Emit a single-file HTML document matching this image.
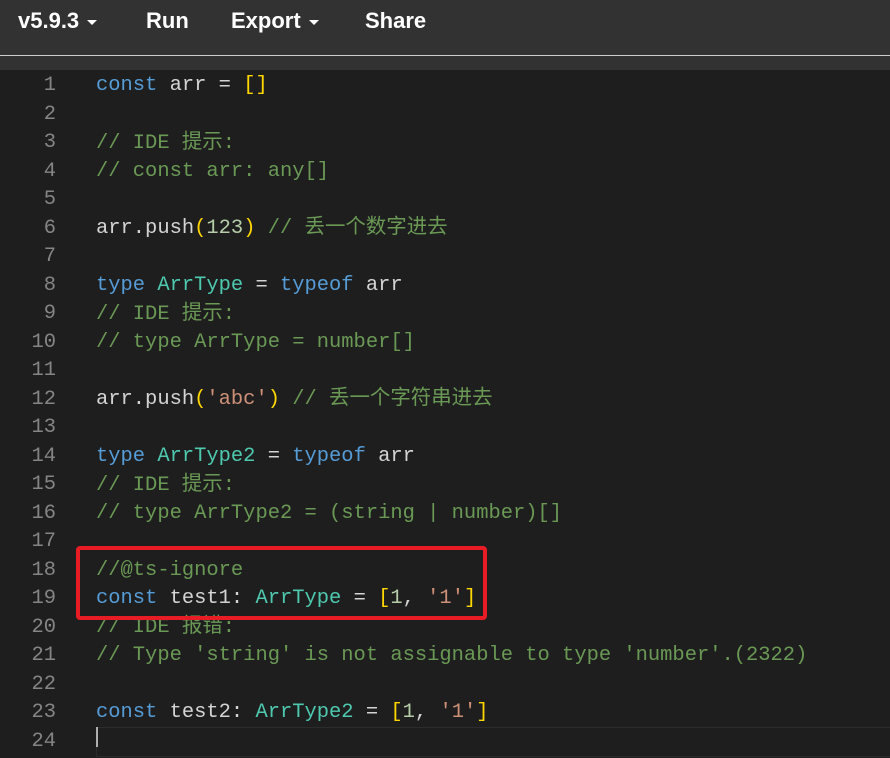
<!DOCTYPE html>
<html><head><meta charset="utf-8"><style>
body{margin:0;width:890px;height:745px;overflow:hidden;background:#1e1e1e;}
.hdr{position:absolute;left:0;top:0;width:890px;height:56px;background:#323232;border-bottom:1px solid #cfcfcf;box-sizing:border-box;}
.hdr span{position:absolute;top:8px;font:bold 22px "Liberation Sans",sans-serif;color:#fff;}
.car{display:inline-block;width:0;height:0;border-left:5px solid transparent;border-right:5px solid transparent;border-top:5px solid #fff;vertical-align:middle;margin-left:8px;}
.gap{position:absolute;left:0;top:56px;width:890px;height:14px;background:#323232;}
.ed{position:absolute;left:0;top:74px;width:890px;}
.l{position:relative;height:28.5px;line-height:28.5px;font:20.45px "Liberation Mono","Noto Sans CJK SC",monospace;color:#d4d4d4;white-space:pre;}
.n{position:absolute;left:0;width:56px;text-align:right;color:#858585;}
.c{position:absolute;left:96px;top:0;}
.c.cj{top:-7.5px}
.k{color:#569cd6}.t{color:#4ec9b0}.m{color:#6a9955}.b{color:#ffd700}.d{color:#b5cea8}.s{color:#ce9178}
.box{position:absolute;left:76px;top:546px;width:411px;height:74px;border:4px solid #e81c24;border-radius:4px;box-sizing:border-box;}
.cur{position:absolute;left:96px;top:727px;width:794px;height:28px;border:1px solid #2c2c2c;}
.cursor{position:absolute;left:96px;top:727px;width:2px;height:20px;background:#aeafad;}
</style></head><body>
<div class="hdr">
<span style="left:18px">v5.9.3<i class="car"></i></span>
<span style="left:146px">Run</span>
<span style="left:231px">Export<i class="car"></i></span>
<span style="left:365px">Share</span>
</div>
<div class="gap"></div>
<div class="cur"></div><div class="cursor"></div>
<div class="ed">
<div class="l"><span class="n">1</span><span class="c"><span class="k">const</span> arr = <span class="b">[]</span></span></div>
<div class="l"><span class="n">2</span></div>
<div class="l"><span class="n">3</span><span class="c cj m">// IDE 提示:</span></div>
<div class="l"><span class="n">4</span><span class="c m">// const arr: any[]</span></div>
<div class="l"><span class="n">5</span></div>
<div class="l"><span class="n">6</span><span class="c cj">arr.push<span class="b">(</span><span class="d">123</span><span class="b">)</span> <span class="m">// 丢一个数字进去</span></span></div>
<div class="l"><span class="n">7</span></div>
<div class="l"><span class="n">8</span><span class="c"><span class="k">type</span> <span class="t">ArrType</span> = <span class="k">typeof</span> arr</span></div>
<div class="l"><span class="n">9</span><span class="c cj m">// IDE 提示:</span></div>
<div class="l"><span class="n">10</span><span class="c m">// type ArrType = number[]</span></div>
<div class="l"><span class="n">11</span></div>
<div class="l"><span class="n">12</span><span class="c cj">arr.push<span class="b">(</span><span class="s">'abc'</span><span class="b">)</span> <span class="m">// 丢一个字符串进去</span></span></div>
<div class="l"><span class="n">13</span></div>
<div class="l"><span class="n">14</span><span class="c"><span class="k">type</span> <span class="t">ArrType2</span> = <span class="k">typeof</span> arr</span></div>
<div class="l"><span class="n">15</span><span class="c cj m">// IDE 提示:</span></div>
<div class="l"><span class="n">16</span><span class="c m">// type ArrType2 = (string | number)[]</span></div>
<div class="l"><span class="n">17</span></div>
<div class="l"><span class="n">18</span><span class="c m">//@ts-ignore</span></div>
<div class="l"><span class="n">19</span><span class="c"><span class="k">const</span> test1: <span class="t">ArrType</span> = <span class="b">[</span><span class="d">1</span>, <span class="s">'1'</span><span class="b">]</span></span></div>
<div class="l"><span class="n">20</span><span class="c cj m">// IDE 报错:</span></div>
<div class="l"><span class="n">21</span><span class="c m">// Type 'string' is not assignable to type 'number'.(2322)</span></div>
<div class="l"><span class="n">22</span></div>
<div class="l"><span class="n">23</span><span class="c"><span class="k">const</span> test2: <span class="t">ArrType2</span> = <span class="b">[</span><span class="d">1</span>, <span class="s">'1'</span><span class="b">]</span></span></div>
<div class="l"><span class="n">24</span></div>
</div>
<div class="box"></div>
</body></html>
